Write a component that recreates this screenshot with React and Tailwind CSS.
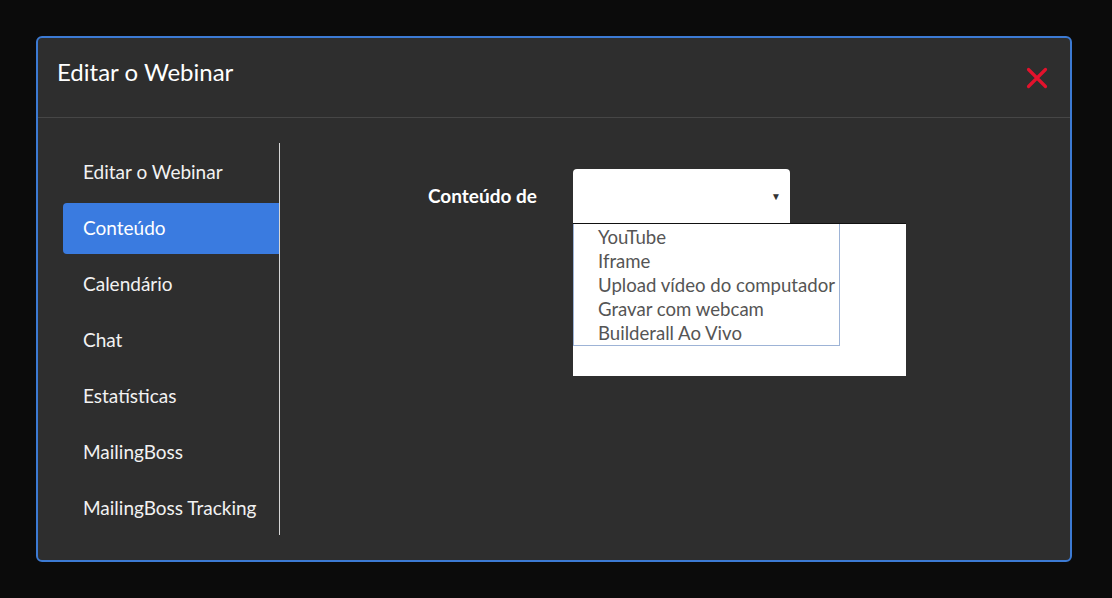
import { useState } from "react";

const menu = [
  "Editar o Webinar",
  "Conteúdo",
  "Calendário",
  "Chat",
  "Estatísticas",
  "MailingBoss",
  "MailingBoss Tracking",
];

const options = [
  "YouTube",
  "Iframe",
  "Upload vídeo do computador",
  "Gravar com webcam",
  "Builderall Ao Vivo",
];

export default function App() {
  const [active, setActive] = useState(1);

  return (
    <div
      className="w-[1112px] h-[598px] bg-[#0b0b0b] pt-[36px] pl-[36px]"
      style={{ fontFamily: "Lato, 'Open Sans', sans-serif" }}
    >
      <div className="w-[1036px] h-[526px] bg-[#2e2e2e] border-2 border-[#3c7ad3] rounded-[6px] flex flex-col">
        {/* header */}
        <div className="h-[80px] border-b border-[#464646] flex items-start justify-between pl-[19px] pr-[22px]">
          <h2 className="text-[24px] text-white mt-[18px] leading-[32px]">
            Editar o Webinar
          </h2>
          <button className="mt-[29px] w-[22px] h-[22px]">
            <svg viewBox="0 0 22 22" className="w-[22px] h-[22px]">
              <path
                d="M2.5 2.5 L19.5 19.5 M19.5 2.5 L2.5 19.5"
                stroke="#e3122c"
                strokeWidth="3.2"
                strokeLinecap="round"
              />
            </svg>
          </button>
        </div>

        {/* body */}
        <div className="flex pt-[25px] pl-[25px]">
          <ul className="w-[217px] h-[392px] border-r border-[#d6d6d6] flex flex-col gap-[5px] pt-[4px]">
            {menu.map((item, i) => (
              <li
                key={item}
                onClick={() => setActive(i)}
                className={
                  "h-[51px] flex items-center pl-[20px] text-[19px] cursor-pointer rounded-l-[4px] " +
                  (i === active ? "bg-[#3a7be0] text-white" : "text-[#f2f2f2]")
                }
              >
                {item}
              </li>
            ))}
          </ul>

          <div className="flex items-start pl-[148px] pt-[26px]">
            <label className="text-[19px] font-bold text-white mt-[13px] w-[145px]">
              Conteúdo de
            </label>
            <div className="relative">
              <div className="w-[217px] h-[54px] bg-white rounded-t-[4px] flex items-center justify-end pr-[9px]">
                <span className="text-[10px] text-[#333]">▼</span>
              </div>
              <div className="absolute left-0 top-[54px] w-[333px] h-[153px] bg-white border-t border-[#111]">
                <ul className="w-[267px] h-[122px] border border-[#9db3d6] border-t-0 pl-[24px] pt-[1px]">
                  {options.map((o) => (
                    <li
                      key={o}
                      className="text-[18.6px] leading-[24px] text-[#555555] whitespace-nowrap"
                    >
                      {o}
                    </li>
                  ))}
                </ul>
              </div>
            </div>
          </div>
        </div>
      </div>
    </div>
  );
}
